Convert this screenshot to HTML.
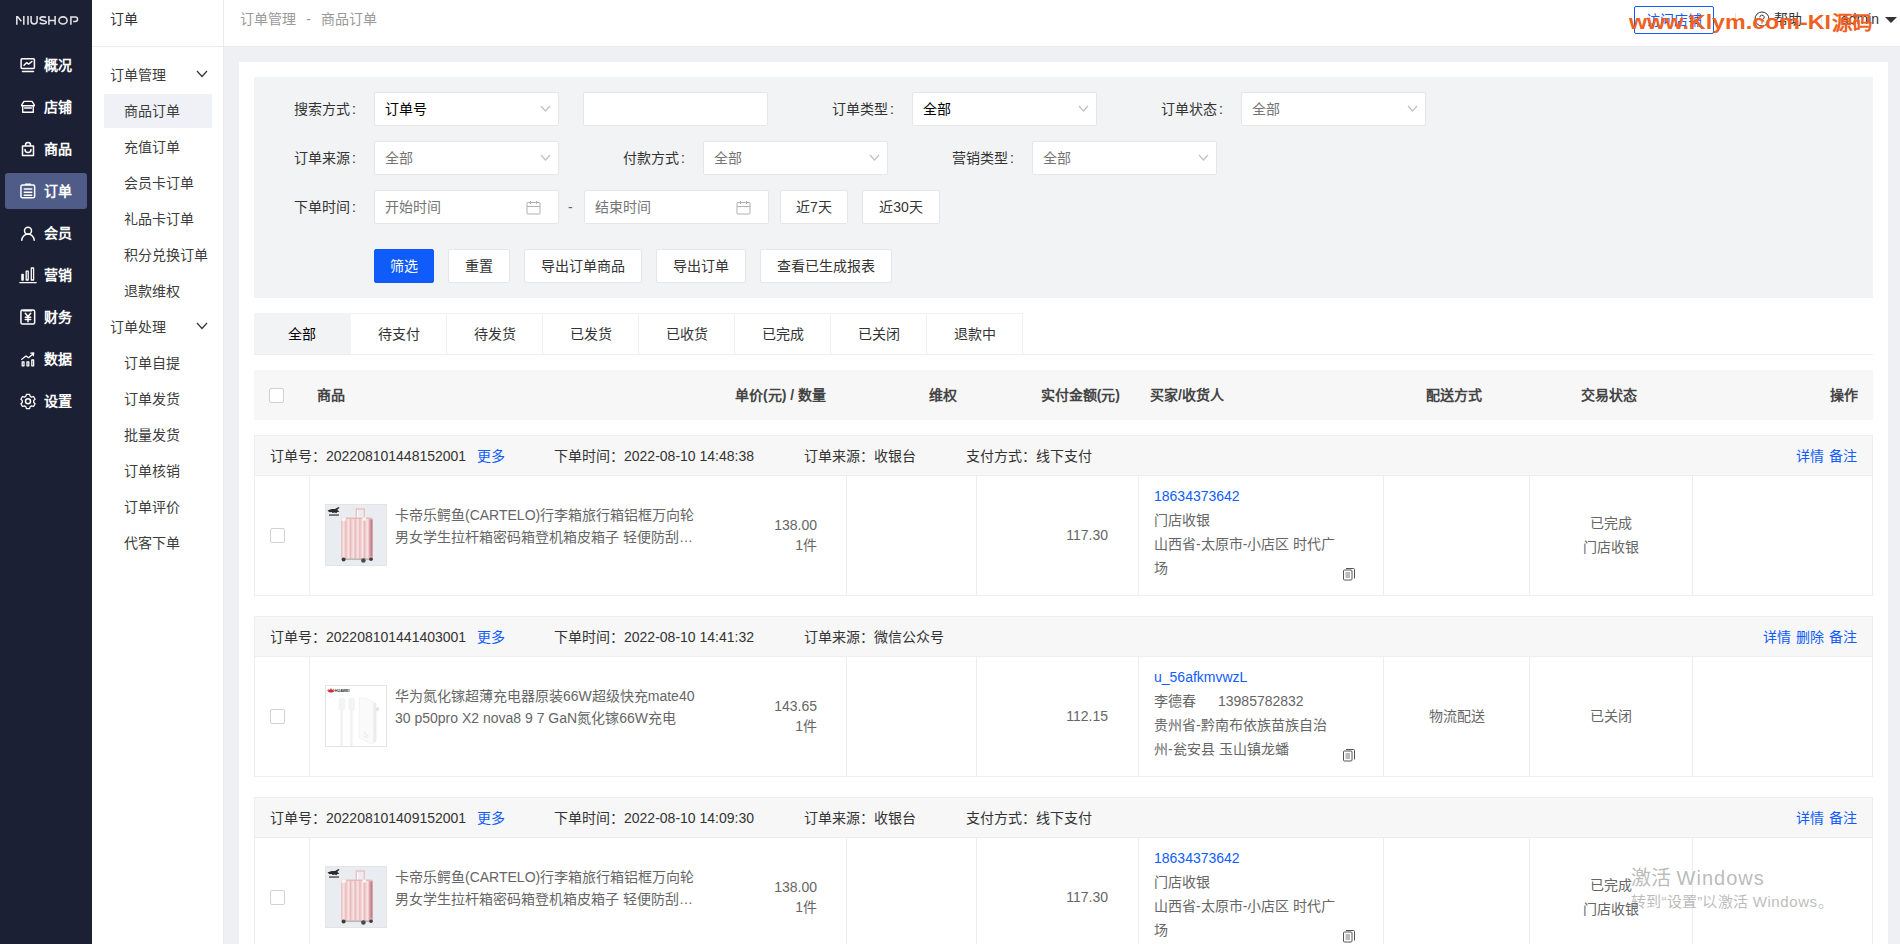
<!DOCTYPE html>
<html lang="zh-CN">
<head>
<meta charset="utf-8">
<title>商品订单</title>
<style>
*{box-sizing:border-box;margin:0;padding:0}
html,body{width:1900px;height:944px;overflow:hidden}
body{font-family:"Liberation Sans",sans-serif;font-size:14px;line-height:20px;color:#333;background:#eff0f4;position:relative}
a{color:#105cfb;text-decoration:none}
.abs{position:absolute}
/* first (dark) sidebar */
#s1{position:absolute;left:0;top:0;width:92px;height:944px;background:#1c2035}
#logo{position:absolute;left:15px;top:11px;width:66px;height:18px}
.m1{position:absolute;left:5px;width:82px;height:36px;border-radius:3px;color:#fff;font-weight:bold;line-height:36px;white-space:nowrap}
.m1.on{background:#4f5c88}
.m1 svg{position:absolute;left:14px;top:9px;width:18px;height:18px;fill:none;stroke:#fff;stroke-width:1.5;stroke-linecap:round;stroke-linejoin:round}
.m1 span{position:absolute;left:39px;top:0}
/* second sidebar */
#s2{position:absolute;left:92px;top:0;width:132px;height:944px;background:#fff;border-right:1px solid #ececee}
#s2 .ttl{position:absolute;left:0;top:0;width:131px;height:47px;border-bottom:1px solid #ececee;line-height:38px;padding-left:18px;color:#333}
.g2{position:absolute;left:18px;width:110px;height:36px;line-height:36px;color:#3c3c3c;white-space:nowrap}
.g2 svg{position:absolute;left:86px;top:13px;width:12px;height:8px;fill:none;stroke:#333;stroke-width:1.2}
.m2{position:absolute;left:12px;width:108px;height:34px;line-height:34px;padding-left:20px;color:#3c3c3c;white-space:nowrap}
.m2.on{background:#f0f1f6}
/* header */
#hd{position:absolute;left:224px;top:0;width:1676px;height:47px;background:#fff;border-bottom:1px solid #ececee}
#crumb{position:absolute;left:16px;top:0;line-height:38px;color:#999;white-space:nowrap}
#crumb i{font-style:normal;display:inline-block;width:25px;text-align:center}
#shopbtn{position:absolute;left:1410px;top:6px;width:80px;height:28px;border:1px solid #105cfb;border-radius:2px;color:#105cfb;line-height:26px;text-align:center;white-space:nowrap}
.hsep{position:absolute;top:13px;width:1px;height:14px;background:#e2e2e2}
#help{position:absolute;left:1530px;top:0;line-height:38px;color:#333;white-space:nowrap}
#help svg{position:absolute;left:0;top:11px;width:16px;height:16px}
#help span{margin-left:20px}
#adm{position:absolute;left:1617px;top:0;line-height:38px;color:#333;white-space:nowrap}
#caret{position:absolute;left:1661px;top:17px;width:0;height:0;border-left:6px solid transparent;border-right:6px solid transparent;border-top:6px solid #333}
#wm{position:absolute;left:1404px;top:6px;width:246px;height:32px;z-index:50}
/* main card */
#card{position:absolute;left:239px;top:62px;width:1649px;height:900px;background:#fff}
#flt{position:absolute;left:15px;top:15px;width:1619px;height:221px;background:#f2f3f5}
.lb{position:absolute;height:34px;line-height:34px;text-align:right;color:#333;white-space:nowrap;width:110px}
.lb b{font-weight:normal;margin-left:2px}
.sel,.inp{position:absolute;width:185px;height:34px;background:#fff;border:1px solid #e6e6e6;border-radius:2px;line-height:32px;padding-left:10px;color:#000;white-space:nowrap}
.sel.ph,.inp.ph{color:#757575}
.sel svg{position:absolute;right:7px;top:12px;width:11px;height:8px;fill:none;stroke:#c2c2c2;stroke-width:1.2}
.inp svg{position:absolute;right:17px;top:9px;width:15px;height:15px;fill:none;stroke:#b0b0b0;stroke-width:1}
.btn{position:absolute;height:34px;background:#fff;border:1px solid #e6e6e6;border-radius:2px;line-height:32px;text-align:center;color:#333;white-space:nowrap}
.btn.pri{background:#105cfb;border-color:#105cfb;color:#fff}
/* tabs */
#tabs{position:absolute;left:15px;top:251px;width:1619px;height:42px;border-bottom:1px solid #eeeeee}
.tab{position:absolute;top:0;width:96px;height:41px;line-height:40px;text-align:center;color:#333;border:1px solid #f0f0f0;border-left:none;border-bottom:none;white-space:nowrap}
.tab.on{background:#f2f3f5;border-color:#f2f3f5;width:97px;color:#000}
/* table */
#th{position:absolute;left:15px;top:308px;width:1619px;height:50px;background:#f7f7f7;font-weight:bold;line-height:50px;color:#444}
#th div{position:absolute;top:0;white-space:nowrap}
.ck{position:absolute;width:15px;height:15px;border:1px solid #d2d2d2;border-radius:2px;background:#fff}
.oh{position:absolute;left:15px;width:1619px;height:41px;background:#f7f7f7;border:1px solid #eeeeee;line-height:41px;color:#333}
.oh div{position:absolute;top:0;white-space:nowrap}
.oh a+a{margin-left:5px}
.ob{position:absolute;left:15px;width:1619px;height:120px;border:1px solid #eeeeee;border-top:none;color:#666}
.ob .c{position:absolute;top:0;height:119px;width:1px;background:#eeeeee}
.ob .t{position:absolute;white-space:nowrap}
.pic{position:absolute;left:70px;top:28px;width:62px;height:62px;border:1px solid #e4e4e4;overflow:hidden;background:#fff}
.pic svg{display:block;width:60px;height:60px}
.cp{position:absolute;left:1087px;top:90px;width:14px;height:15px}
/* windows activation watermark */
#win1{position:absolute;left:1631px;top:864px;font-size:20px;line-height:28px;color:rgba(120,120,120,.52);white-space:nowrap;z-index:60}
#win1 span{letter-spacing:1px}
#win2{position:absolute;left:1631px;top:891px;font-size:15px;line-height:22px;color:rgba(120,120,120,.5);white-space:nowrap;z-index:60;letter-spacing:.25px}
#win2 span{letter-spacing:.6px}
</style>
</head>
<body>
<div id="s1">
  <svg id="logo" viewBox="0 0 66 18" role="img" aria-label="NIUSHOP"><title>NIUSHOP</title><g fill="none" stroke="#e2e2e6" stroke-width="1.550"><path d="M1.800 13.800V5M2.400 5.600l4 4.600M8.800 5v8.800"/><path d="M13 5v8.800"/><path d="M16.100 5v5.300a3 2.600 0 0 0 6 0V5"/><path d="M31 6.600c-.9-.9-6-1.300-6 .9 0 2.600 6.400 1.200 6.400 3.600 0 2.300-5.600 2.100-6.600.6"/><path d="M33.900 5v8.800M40.100 5v8.800M33.900 9.400h6.200"/><ellipse cx="48" cy="9.400" rx="4.100" ry="3.550"/><path d="M55.900 13.800V5.900h4.400a2.250 2.250 0 0 1 0 4.500h-2.200"/></g></svg>
  <div class="m1" style="top:47px"><svg viewBox="0 0 18 18"><rect x="2.100" y="2.700" width="13.300" height="9.800" rx="1"/><path d="M5 9.300l2.600-2.600 2 1.400 3.300-2.600M3.500 15.500h11"/></svg><span>概况</span></div>
  <div class="m1" style="top:89px"><svg viewBox="0 0 18 18"><path d="M5 3.400h8l2.300 3.400v.9H2.700v-.9zM3.700 8.300v6h10.600v-6M5.600 10h6.800" stroke-width="1.400"/></svg><span>店铺</span></div>
  <div class="m1" style="top:131px"><svg viewBox="0 0 18 18"><path d="M3.500 6h11v9.500h-11zM6.500 6V5a2.500 2.500 0 0 1 5 0v1M6 9.500a3 3 0 0 0 6 0"/></svg><span>商品</span></div>
  <div class="m1 on" style="top:173px"><svg viewBox="0 0 18 18"><rect x="1.950" y="2.950" width="13.700" height="12.900" rx="1.600"/><path d="M6.500 2.200h5M5.300 7.100h7.400M5.300 10.300h7.400M5.300 13.300h7.400"/></svg><span>订单</span></div>
  <div class="m1" style="top:215px"><svg viewBox="0 0 18 18"><circle cx="9" cy="6.800" r="3.500"/><path d="M2.800 16.300a6.200 6.200 0 0 1 12.400 0"/></svg><span>会员</span></div>
  <div class="m1" style="top:257px"><svg viewBox="0 0 18 18"><path d="M2.900 8.400h1.300v5.600h-1.300zM7.200 5.200h2v8.800h-2zM12.300 2h2.300v12h-2.300zM.8 16.600h16.400" stroke-width="1.300"/></svg><span>营销</span></div>
  <div class="m1" style="top:299px"><svg viewBox="0 0 18 18"><rect x="1.950" y="1.900" width="13.700" height="14.200" rx="1.600"/><path d="M6.300 5.300l2.700 3.200 2.700-3.200M9 8.500v5.300M6.300 9.300h5.400M6.300 11.500h5.400M4 2.800h8.500"/></svg><span>财务</span></div>
  <div class="m1" style="top:341px"><svg viewBox="0 0 18 18"><path d="M3.200 11.800h1.800v4h-1.800zM8 11.800h1.800v4h-1.800zM12.800 10h1.800v5.800h-1.800zM2.800 9.300l4.200-3.300 2.600 1.700 4.600-4M11.800 3.200l2.900-.4-.4 2.900" stroke-width="1.300"/></svg><span>数据</span></div>
  <div class="m1" style="top:383px"><svg viewBox="0 0 18 18"><circle cx="9" cy="9.300" r="2.500"/><path d="M7.400 2.300h3.200l.5 1.900 1.500.9 1.900-.6 1.600 2.800-1.400 1.300v1.800l1.400 1.300-1.600 2.800-1.900-.6-1.500.9-.5 1.900H7.400l-.5-1.900-1.500-.9-1.900.6-1.600-2.800 1.400-1.300V8.600L1.900 7.300l1.600-2.800 1.900.6 1.500-.9z" stroke-width="1.300"/></svg><span>设置</span></div>
</div>
<div id="s2">
  <div class="ttl">订单</div>
  <div class="g2" style="top:57px">订单管理<svg viewBox="0 0 12 8"><path d="M1 1l5 5.500 5-5.500"/></svg></div>
  <div class="m2 on" style="top:94px">商品订单</div>
  <div class="m2" style="top:130px">充值订单</div>
  <div class="m2" style="top:166px">会员卡订单</div>
  <div class="m2" style="top:202px">礼品卡订单</div>
  <div class="m2" style="top:238px">积分兑换订单</div>
  <div class="m2" style="top:274px">退款维权</div>
  <div class="g2" style="top:309px">订单处理<svg viewBox="0 0 12 8"><path d="M1 1l5 5.500 5-5.500"/></svg></div>
  <div class="m2" style="top:346px">订单自提</div>
  <div class="m2" style="top:382px">订单发货</div>
  <div class="m2" style="top:418px">批量发货</div>
  <div class="m2" style="top:454px">订单核销</div>
  <div class="m2" style="top:490px">订单评价</div>
  <div class="m2" style="top:526px">代客下单</div>
</div>
<div id="hd">
  <div id="crumb">订单管理<i>-</i>商品订单</div>
  <div id="shopbtn">访问店铺</div>
  <div class="hsep" style="left:1511px"></div>
  <div id="help"><svg viewBox="0 0 16 16"><circle cx="8" cy="8" r="7" fill="none" stroke="#333" stroke-width="1"/><path d="M5.800 6.300a2.200 2.200 0 1 1 3.300 1.900c-.7.400-1.100.8-1.100 1.600M8 11.300v1.200" fill="none" stroke="#333" stroke-width="1"/></svg><span>帮助</span></div>
  <div class="hsep" style="left:1597px"></div>
  <div id="adm">admin</div>
  <div id="caret"></div>
  <svg id="wm" viewBox="0 0 246 32"><text x="1" y="23" font-family="Liberation Sans, sans-serif" font-size="20" font-weight="bold" fill="#f0611f" textLength="202" lengthAdjust="spacingAndGlyphs">www.Klym.com-KI</text><text x="203.500" y="23.500" font-family="Liberation Sans, sans-serif" font-size="19" font-weight="bold" fill="#f0611f" textLength="41" lengthAdjust="spacingAndGlyphs">源码</text></svg>
</div>
<div id="card">
<div id="flt">
<div class="lb" style="left:-8px;top:15px">搜索方式<b>:</b></div>
<div class="sel" style="left:120px;top:15px">订单号<svg viewBox="0 0 11 8"><path d="M1 1l4.500 5 4.500-5"/></svg></div>
<div class="inp" style="left:329px;top:15px"></div>
<div class="lb" style="left:530px;top:15px">订单类型<b>:</b></div>
<div class="sel" style="left:658px;top:15px">全部<svg viewBox="0 0 11 8"><path d="M1 1l4.500 5 4.500-5"/></svg></div>
<div class="lb" style="left:859px;top:15px">订单状态<b>:</b></div>
<div class="sel ph" style="left:987px;top:15px">全部<svg viewBox="0 0 11 8"><path d="M1 1l4.500 5 4.500-5"/></svg></div>
<div class="lb" style="left:-8px;top:64px">订单来源<b>:</b></div>
<div class="sel ph" style="left:120px;top:64px">全部<svg viewBox="0 0 11 8"><path d="M1 1l4.500 5 4.500-5"/></svg></div>
<div class="lb" style="left:321px;top:64px">付款方式<b>:</b></div>
<div class="sel ph" style="left:449px;top:64px">全部<svg viewBox="0 0 11 8"><path d="M1 1l4.500 5 4.500-5"/></svg></div>
<div class="lb" style="left:650px;top:64px">营销类型<b>:</b></div>
<div class="sel ph" style="left:778px;top:64px">全部<svg viewBox="0 0 11 8"><path d="M1 1l4.500 5 4.500-5"/></svg></div>
<div class="lb" style="left:-8px;top:113px">下单时间<b>:</b></div>
<div class="inp ph" style="left:120px;top:113px">开始时间<svg viewBox="0 0 15 15"><rect x="1" y="2.500" width="13" height="11.500" rx=".5"/><path d="M1 6.500h13M4.500 1v3M10.500 1v3"/></svg></div>
<div class="abs" style="left:314px;top:113px;line-height:34px;color:#666">-</div>
<div class="inp ph" style="left:330px;top:113px">结束时间<svg viewBox="0 0 15 15"><rect x="1" y="2.500" width="13" height="11.500" rx=".5"/><path d="M1 6.500h13M4.500 1v3M10.500 1v3"/></svg></div>
<div class="btn" style="left:526px;top:113px;width:68px">近7天</div>
<div class="btn" style="left:608px;top:113px;width:78px">近30天</div>
<div class="btn pri" style="left:120px;top:172px;width:60px">筛选</div>
<div class="btn" style="left:194px;top:172px;width:62px">重置</div>
<div class="btn" style="left:270px;top:172px;width:118px">导出订单商品</div>
<div class="btn" style="left:402px;top:172px;width:90px">导出订单</div>
<div class="btn" style="left:506px;top:172px;width:132px">查看已生成报表</div>
</div>
<div id="tabs"><div class="tab on" style="left:0px">全部</div><div class="tab" style="left:97px">待支付</div><div class="tab" style="left:193px">待发货</div><div class="tab" style="left:289px">已发货</div><div class="tab" style="left:385px">已收货</div><div class="tab" style="left:481px">已完成</div><div class="tab" style="left:577px">已关闭</div><div class="tab" style="left:673px">退款中</div></div>
<div id="th"><div class="ck" style="left:15px;top:18px"></div><div style="left:63px">商品</div><div style="left:481px">单价(元) / 数量</div><div style="left:675px">维权</div><div style="right:753px">实付金额(元)</div><div style="left:896px">买家/收货人</div><div style="left:1172px">配送方式</div><div style="left:1327px">交易状态</div><div style="right:15px">操作</div></div>
<div class="oh" style="top:373px"><div style="left:15px">订单号：202208101448152001<a style="margin-left:11px">更多</a></div><div style="left:299px">下单时间：2022-08-10 14:48:38</div><div style="left:549px">订单来源：收银台</div><div style="left:711px">支付方式：线下支付</div><div style="right:15px"><a>详情</a><a>备注</a></div></div>
<div class="ob" style="top:414px"><div class="c" style="left:54px"></div><div class="c" style="left:591px"></div><div class="c" style="left:721px"></div><div class="c" style="left:883px"></div><div class="c" style="left:1128px"></div><div class="c" style="left:1274px"></div><div class="c" style="left:1437px"></div><div class="ck" style="left:15px;top:52px"></div><div class="pic"><svg viewBox="0 0 60 60"><defs><linearGradient id="rg" x1="0" y1="0" x2="1" y2="0"><stop offset="0" stop-color="#eec3c3"/><stop offset=".5" stop-color="#f8e6e5"/><stop offset="1" stop-color="#e4aeb1"/></linearGradient><pattern id="rp" width="4.700" height="10" patternUnits="userSpaceOnUse" x="15.5"><rect width="4.700" height="10" fill="url(#rg)"/></pattern></defs><rect width="60" height="60" fill="#e9edf2"/><path d="M1.500 5.500c2-1.200 5-1.800 7.500-1.400l3.500-2 1 .6-2.400 2.200c1 .3 1.800.9 2.300 1.800l-2 .3-1.200 1.300-1.300-.9-2.500.6-.6-1-2.300.2z" fill="#2a2a2a"/><path d="M3 9.300h10v1.500H3z" fill="#555"/><path d="M30.300 13.500V4h8v9.500" fill="none" stroke="#efc0c1" stroke-width="1.400"/><path d="M31.600 5.500v8" stroke="#fff" stroke-width="1.200"/><rect x="15.200" y="12.600" width="31.800" height="42" rx="2.600" fill="#e8b9ba"/><rect x="15.800" y="14" width="27.400" height="39.500" fill="url(#rp)"/><path d="M15.400 15.200a2.600 2.600 0 0 1 2.600-2.600h1.800v3.200h-4.400zM36.500 12.600h3.500v3h-3.500z" fill="#fbf6f5"/><path d="M43.200 14h3.800v40h-3.800z" fill="#dba4aa"/><path d="M45.200 15v36" stroke="#a8707f" stroke-width=".9"/><path d="M18.500 54.300h25" stroke="#b9b9b9" stroke-width="1.500"/><circle cx="17.600" cy="54.600" r="2" fill="#3c3c3c"/><circle cx="37.400" cy="55.500" r="2.300" fill="#4a4a4a"/><circle cx="45" cy="54.200" r="1.800" fill="#3c3c3c"/></svg></div><div class="t" style="left:140px;top:28px;line-height:22px;width:300px;overflow:hidden">卡帝乐鳄鱼(CARTELO)行李箱旅行箱铝框万向轮<br>男女学生拉杆箱密码箱登机箱皮箱子 轻便防刮…</div><div class="t" style="right:1055px;top:39px;line-height:20px;text-align:right">138.00<br>1件</div><div class="t" style="right:764px;top:49px;line-height:20px">117.30</div><div class="t" style="left:899px;top:8px;line-height:24px"><a>18634373642</a><br>门店收银<br>山西省-太原市-小店区 时代广<br>场</div><svg class="cp" viewBox="0 0 14 15"><path d="M4 2.500h7.500a1 1 0 0 1 1 1v9" fill="none" stroke="#555" stroke-width="1"/><rect x="1.500" y="4" width="8.500" height="10" rx="1" fill="#fff" stroke="#555" stroke-width="1"/><path d="M3.500 7h4.500M3.500 9h4.500M3.500 11h4.500" stroke="#777" stroke-width="1"/></svg><div class="t" style="left:1274px;width:164px;text-align:center;top:35px;line-height:24px">已完成<br>门店收银</div></div>
<div class="oh" style="top:554px"><div style="left:15px">订单号：202208101441403001<a style="margin-left:11px">更多</a></div><div style="left:299px">下单时间：2022-08-10 14:41:32</div><div style="left:549px">订单来源：微信公众号</div><div style="right:15px"><a>详情</a><a>删除</a><a>备注</a></div></div>
<div class="ob" style="top:595px"><div class="c" style="left:54px"></div><div class="c" style="left:591px"></div><div class="c" style="left:721px"></div><div class="c" style="left:883px"></div><div class="c" style="left:1128px"></div><div class="c" style="left:1274px"></div><div class="c" style="left:1437px"></div><div class="ck" style="left:15px;top:52px"></div><div class="pic"><svg viewBox="0 0 60 60"><rect width="60" height="60" fill="#fff"/><path d="M4.300 6.600C2.500 6.300 1.300 5.200 1.200 3.800l1.600.9-.7-2 1.700 1.300.4-2 .8 1.900.8-1.900.4 2L7.900 2.700l-.7 2 1.600-.9c-.1 1.400-1.300 2.500-3.100 2.800z" fill="#c7313a"/><text x="8.800" y="5.900" font-family="Liberation Sans, sans-serif" font-size="4.200" font-weight="bold" fill="#2b2b2b" textLength="14.800" lengthAdjust="spacingAndGlyphs">HUAWEI</text><rect x="13" y="12.500" width="5.600" height="11.500" rx="1.200" fill="#f4f4f4" stroke="#ececec" stroke-width=".4"/><rect x="22.800" y="12.500" width="5.600" height="11.500" rx="1.200" fill="#f4f4f4" stroke="#ececec" stroke-width=".4"/><path d="M15.600 24v36M25.400 24v36" stroke="#f1f1f1" stroke-width="2.500"/><path d="M33.300 11.500l7.500.8 9.300 5.200v37.800l-4.700 2.600-12.100-6.400z" fill="#fafafa" stroke="#ebebeb" stroke-width=".5"/><path d="M47.300 16.200l2.800 1.300v37.800l-2.800 1.500z" fill="#ececec"/><path d="M50.100 21.600l2.800-.4v3.600l-2.800.4z" fill="#e2e2e2"/><path d="M38 45.500l1.500 2.800 3.300 1.700M37.800 50.300l4.500 1.500" fill="none" stroke="#dedede" stroke-width=".7"/></svg></div><div class="t" style="left:140px;top:28px;line-height:22px;width:300px;overflow:hidden">华为氮化镓超薄充电器原装66W超级快充mate40<br>30 p50pro X2 nova8 9 7 GaN氮化镓66W充电</div><div class="t" style="right:1055px;top:39px;line-height:20px;text-align:right">143.65<br>1件</div><div class="t" style="right:764px;top:49px;line-height:20px">112.15</div><div class="t" style="left:899px;top:8px;line-height:24px"><a>u_56afkmvwzL</a><br>李德春<span style="display:inline-block;width:22px"></span>13985782832<br>贵州省-黔南布依族苗族自治<br>州-瓮安县 玉山镇龙蟠</div><svg class="cp" viewBox="0 0 14 15"><path d="M4 2.500h7.500a1 1 0 0 1 1 1v9" fill="none" stroke="#555" stroke-width="1"/><rect x="1.500" y="4" width="8.500" height="10" rx="1" fill="#fff" stroke="#555" stroke-width="1"/><path d="M3.500 7h4.500M3.500 9h4.500M3.500 11h4.500" stroke="#777" stroke-width="1"/></svg><div class="t" style="left:1128px;width:147px;text-align:center;top:49px;line-height:20px">物流配送</div><div class="t" style="left:1274px;width:164px;text-align:center;top:47px;line-height:24px">已关闭</div></div>
<div class="oh" style="top:735px"><div style="left:15px">订单号：202208101409152001<a style="margin-left:11px">更多</a></div><div style="left:299px">下单时间：2022-08-10 14:09:30</div><div style="left:549px">订单来源：收银台</div><div style="left:711px">支付方式：线下支付</div><div style="right:15px"><a>详情</a><a>备注</a></div></div>
<div class="ob" style="top:776px"><div class="c" style="left:54px"></div><div class="c" style="left:591px"></div><div class="c" style="left:721px"></div><div class="c" style="left:883px"></div><div class="c" style="left:1128px"></div><div class="c" style="left:1274px"></div><div class="c" style="left:1437px"></div><div class="ck" style="left:15px;top:52px"></div><div class="pic"><svg viewBox="0 0 60 60"><defs><linearGradient id="rg" x1="0" y1="0" x2="1" y2="0"><stop offset="0" stop-color="#eec3c3"/><stop offset=".5" stop-color="#f8e6e5"/><stop offset="1" stop-color="#e4aeb1"/></linearGradient><pattern id="rp" width="4.700" height="10" patternUnits="userSpaceOnUse" x="15.5"><rect width="4.700" height="10" fill="url(#rg)"/></pattern></defs><rect width="60" height="60" fill="#e9edf2"/><path d="M1.500 5.500c2-1.200 5-1.800 7.500-1.400l3.500-2 1 .6-2.400 2.200c1 .3 1.800.9 2.300 1.800l-2 .3-1.200 1.300-1.300-.9-2.500.6-.6-1-2.300.2z" fill="#2a2a2a"/><path d="M3 9.300h10v1.500H3z" fill="#555"/><path d="M30.300 13.500V4h8v9.500" fill="none" stroke="#efc0c1" stroke-width="1.400"/><path d="M31.600 5.500v8" stroke="#fff" stroke-width="1.200"/><rect x="15.200" y="12.600" width="31.800" height="42" rx="2.600" fill="#e8b9ba"/><rect x="15.800" y="14" width="27.400" height="39.500" fill="url(#rp)"/><path d="M15.400 15.200a2.600 2.600 0 0 1 2.600-2.600h1.800v3.200h-4.400zM36.500 12.600h3.500v3h-3.500z" fill="#fbf6f5"/><path d="M43.200 14h3.800v40h-3.800z" fill="#dba4aa"/><path d="M45.200 15v36" stroke="#a8707f" stroke-width=".9"/><path d="M18.500 54.300h25" stroke="#b9b9b9" stroke-width="1.500"/><circle cx="17.600" cy="54.600" r="2" fill="#3c3c3c"/><circle cx="37.400" cy="55.500" r="2.300" fill="#4a4a4a"/><circle cx="45" cy="54.200" r="1.800" fill="#3c3c3c"/></svg></div><div class="t" style="left:140px;top:28px;line-height:22px;width:300px;overflow:hidden">卡帝乐鳄鱼(CARTELO)行李箱旅行箱铝框万向轮<br>男女学生拉杆箱密码箱登机箱皮箱子 轻便防刮…</div><div class="t" style="right:1055px;top:39px;line-height:20px;text-align:right">138.00<br>1件</div><div class="t" style="right:764px;top:49px;line-height:20px">117.30</div><div class="t" style="left:899px;top:8px;line-height:24px"><a>18634373642</a><br>门店收银<br>山西省-太原市-小店区 时代广<br>场</div><svg class="cp" viewBox="0 0 14 15"><path d="M4 2.500h7.500a1 1 0 0 1 1 1v9" fill="none" stroke="#555" stroke-width="1"/><rect x="1.500" y="4" width="8.500" height="10" rx="1" fill="#fff" stroke="#555" stroke-width="1"/><path d="M3.500 7h4.500M3.500 9h4.500M3.500 11h4.500" stroke="#777" stroke-width="1"/></svg><div class="t" style="left:1274px;width:164px;text-align:center;top:35px;line-height:24px">已完成<br>门店收银</div></div>
</div>
<div id="win1">激活 <span>Windows</span></div>
<div id="win2">转到“设置”以激活 <span>Windows</span>。</div>
</body>
</html>
